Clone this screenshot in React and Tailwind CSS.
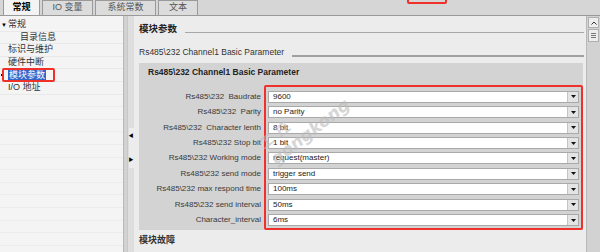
import React from "react";

const cjk = { fontFamily: '"Liberation Sans", "Noto Sans CJK SC", sans-serif' };

const params = [
  { label: "Rs485\\232  Baudrate", value: "9600" },
  { label: "Rs485\\232  Parity", value: "no Parity" },
  { label: "Rs485\\232  Character lenth", value: "8 bit" },
  { label: "Rs485\\232 Stop bit", value: "1 bit" },
  { label: "Rs485\\232 Working mode", value: "request(master)" },
  { label: "Rs485\\232 send mode", value: "trigger send" },
  { label: "Rs485\\232 max respond time", value: "100ms" },
  { label: "Rs485\\232 send interval", value: "50ms" },
  { label: "Character_interval", value: "6ms" },
];

const tree = [
  { text: "常规", indent: "pl-[8px]", arrow: true },
  { text: "目录信息", indent: "pl-[20px]" },
  { text: "标识与维护", indent: "pl-[8px]" },
  { text: "硬件中断", indent: "pl-[8px]" },
  { text: "模块参数", indent: "pl-[8px]", selected: true },
  { text: "I/O 地址", indent: "pl-[8px]" },
];

const Tab = ({ label, active, w }) => (
  <div
    className={`${w} flex items-center justify-center text-[9px] border border-b-0 border-[#9a9a9a] ${
      active ? "bg-[#f3f3f3] text-black font-bold h-[16px]" : "bg-[#dcdcdc] text-[#555] h-[15px]"
    }`}
  >
    {label}
  </div>
);

const Select = ({ value }) => (
  <div className="flex h-[12px] w-[311px] items-center border border-[#a9a9a9] bg-white">
    <span className="flex-1 pl-[4px] text-[8px] leading-none text-[#222]">{value}</span>
    <div className="flex h-[10px] w-[11px] items-center justify-center border-l border-[#c4c4c4] bg-[#e4e4e4]">
      <svg width="5" height="3" viewBox="0 0 5 3">
        <path d="M0 0h5L2.5 3z" fill="#111" />
      </svg>
    </div>
  </div>
);

const App = () => {
  return (
    <div className="relative flex h-[252px] w-[600px] flex-col overflow-hidden bg-[#d6d6d6]" style={cjk}>
      {/* top strip */}
      <div className="relative h-[3px] bg-[#4a535c]">
        <div className="absolute left-[407px] top-[-4px] h-[8px] w-[40px] rounded-[2px] border-2 border-[#f0302a]" />
      </div>

      {/* tabs */}
      <div className="flex h-[16px] items-end gap-[2px] border-b border-[#9a9a9a] pl-[3px]">
        <Tab label="常规" active w="w-[37px]" />
        <Tab label="IO 变量" w="w-[51px]" />
        <Tab label="系统常数" w="w-[61px]" />
        <Tab label="文本" w="w-[40px]" />
      </div>

      <div className="flex flex-1">
        {/* left tree */}
        <div className="w-[123px] bg-[#f4f4f4] pt-[3px]">
          {tree.map((t) => (
            <div
              key={t.text}
              className={`relative flex h-[12.6px] items-center border-b border-[#e9e9e9] ${t.indent}`}
            >
              {t.arrow && (
                <span className="absolute left-[1px] text-[6px] leading-none text-black">▼</span>
              )}
              {t.selected ? (
                <>
                  <span className="absolute left-[1px] top-[5px] h-[2px] w-[2px] bg-black" />
                  <span className="bg-[#3366cc] px-[1px] text-[9px] leading-[11px] text-white">{t.text}</span>
                  <div className="absolute left-[2px] top-[-1px] h-[14px] w-[53px] rounded-[2px] border-2 border-[#f0302a]" />
                </>
              ) : (
                <span className="text-[9px] leading-none text-[#333]">{t.text}</span>
              )}
            </div>
          ))}
          {Array.from({ length: 13 }).map((_, i) => (
            <div key={i} className="h-[12.6px] border-b border-[#ececec]" />
          ))}
        </div>

        {/* splitter */}
        <div className="flex w-[11px] border-l border-[#b8b8b8] bg-[#dedede]">
          <div className="w-[4px] border-r border-[#c8c8c8] bg-[#d2d2d2]" />
          <div className="flex flex-1 flex-col items-center pt-[112px]">
            <div className="flex h-[40px] w-[5px] flex-col items-center justify-between bg-[#ececec] pt-[5px] pb-[6px]">
              <span className="text-[5px] leading-none text-black">◀</span>
              <span className="text-[5px] leading-none text-black">▶</span>
            </div>
          </div>
        </div>

        {/* right content */}
        <div className="flex flex-1 flex-col bg-[#ececec] pl-[5px] pr-[2px]">
          <div className="flex items-end pt-[8px]">
            <span className="text-[9.5px] font-bold leading-none text-[#222]">模块参数</span>
            <div className="ml-[8px] mb-[1px] flex-1 border-b-[1.5px] border-[#a8a8a8]" />
          </div>
          <div className="mt-[14px] flex items-end">
            <span className="text-[8.5px] leading-none text-[#333]">Rs485\232 Channel1 Basic Parameter</span>
            <div className="ml-[8px] mb-[-1px] flex-1 border-b-2 border-[#a0a0a0]" />
          </div>

          <div className="mr-[1px] mt-[7px] h-[167px] bg-[#d3d3d3] pl-[9px] pt-[4px]">
            <div className="text-[8.5px] font-bold leading-[10px] text-[#222]">
              Rs485\232 Channel1 Basic Parameter
            </div>
            <div className="mt-[8px] flex">
              <div className="flex w-[113px] flex-col items-end pt-[4px]">
                {params.map((p) => (
                  <div key={p.label} className="flex h-[15.45px] items-center whitespace-pre text-[8px] text-[#3a3a3a]">
                    {p.label}
                  </div>
                ))}
              </div>
              <div className="ml-[3px] w-[319px] rounded-[2px] border-2 border-[#f0302a] pl-[2px] pt-[2px]">
                {params.map((p) => (
                  <div key={p.label} className="flex h-[15.45px] items-center">
                    <Select value={p.value} />
                  </div>
                ))}
              </div>
            </div>
          </div>

          <div className="mt-[6px] text-[9px] font-bold leading-none text-[#333]">模块故障</div>
        </div>

        {/* right scrollbar */}
        <div className="w-[14px] border-l border-[#b8b8b8] bg-[#d2d2d2] px-[1px] pt-[1px]">
          <div className="flex h-[11px] items-center justify-center border border-[#b0b0b0] bg-[#ededed]">
            <svg width="6" height="4" viewBox="0 0 6 4">
              <path d="M0.5 3.5L3 1l2.5 2.5" stroke="#333" strokeWidth="1" fill="none" />
            </svg>
          </div>
          <div className="mt-[1px] flex h-[13px] flex-col items-center justify-center gap-[1px] border border-[#b0b0b0] bg-[#ededed]">
            <div className="h-px w-[5px] bg-[#777]" />
            <div className="h-px w-[5px] bg-[#777]" />
            <div className="h-px w-[5px] bg-[#777]" />
          </div>
        </div>
      </div>

      {/* watermark */}
      <div className="pointer-events-none absolute left-[258px] top-[104px] origin-center -rotate-[38deg] text-[#bcbcbc] opacity-60">
        <div className="flex items-start gap-[6px]">
          <span className="text-[14px] font-bold tracking-[6px]">工控</span>
          <span className="text-[9px]">®</span>
        </div>
        <div className="-mt-[4px] text-[17px] font-bold italic" style={{ fontFamily: '"DejaVu Sans", sans-serif' }}>
          gongkong
        </div>
      </div>
    </div>
  );
};

export default App;
